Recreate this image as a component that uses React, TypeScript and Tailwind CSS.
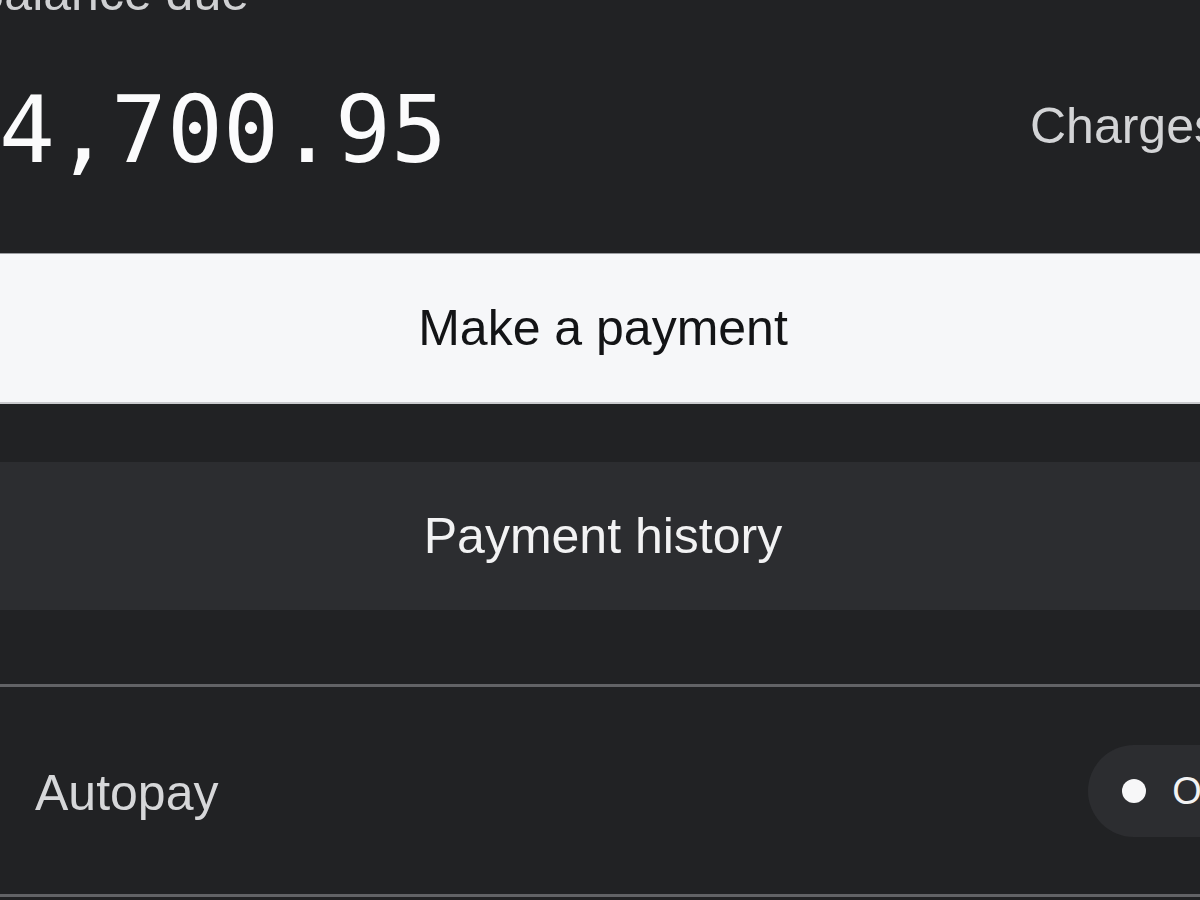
export default function App() {
  const sans = { fontFamily: '"Liberation Sans", Arial, sans-serif' }

  return (
    <div className="w-[1200px] h-[900px] overflow-hidden bg-[#212224]" style={sans}>
      <div className="w-[1286px] -ml-[40px] font-['Liberation_Sans',Arial,sans-serif]">
        {/* balance header */}
        <div className="-mt-[32px] pl-[11px] text-[50px] leading-none text-[#cfd0d2] whitespace-nowrap">
          Balance due
        </div>

        <div className="mt-[66px] flex items-center">
          <div className="flex-1 -ml-[17px] font-['DejaVu_Sans_Mono',monospace] text-[93px] leading-none text-[#fbfbfc] slashed-zero whitespace-nowrap">
            $4,700.95
          </div>
          <div className="w-[216px] shrink-0 mb-[10px] text-[50px] leading-none text-[#d3d4d6] whitespace-nowrap">
            Charges
          </div>
        </div>

        {/* actions */}
        <div className="mt-[76px] flex flex-col">
          <button className="h-[151px] w-full bg-[#f6f7f9] border-t border-b-2 border-t-[#9c9ea2] border-b-[#c9cacd] text-[50px] leading-none text-[#131416]">
            Make a payment
          </button>
          <button className="mt-[58px] h-[148px] w-full bg-[#2c2d30] text-[50px] leading-none text-[#f2f2f3]">
            Payment history
          </button>
        </div>

        {/* autopay */}
        <div className="mt-[74px] h-[213px] border-y-[3px] border-[#626366] flex items-center justify-between pl-[75px]">
          <span className="text-[50px] leading-none text-[#d6d7d9] mt-[4px]">Autopay</span>
          <div className="-mr-[11px] h-[92px] flex items-center gap-[26px] pl-[34px] pr-[34px] rounded-full bg-[#2c2d30]">
            <span className="w-[24px] h-[24px] rounded-full bg-[#f7f7f8]" />
            <span className="text-[38px] leading-none text-[#f2f2f3]">On</span>
          </div>
        </div>
      </div>
    </div>
  )
}
